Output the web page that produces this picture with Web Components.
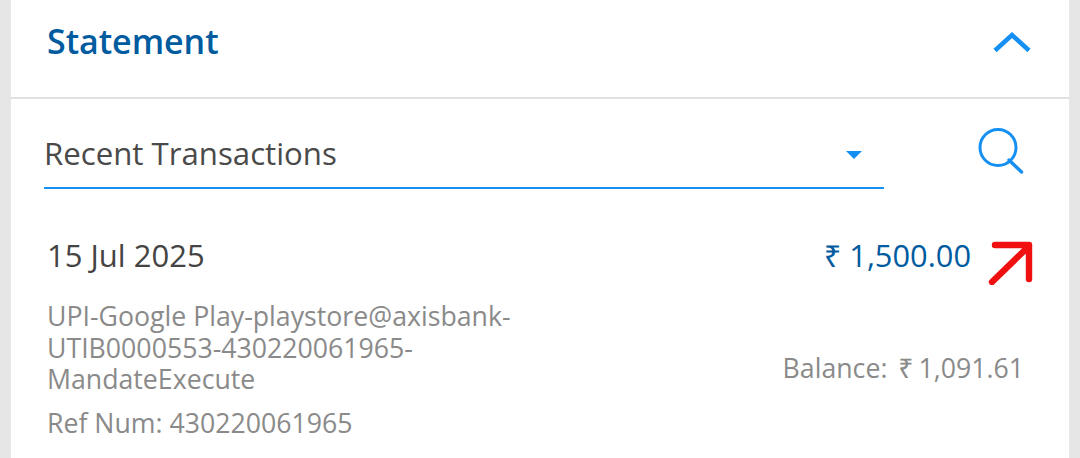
<!DOCTYPE html>
<html>
<head>
<meta charset="utf-8">
<style>
  html, body { margin: 0; padding: 0; height: 458px; overflow: hidden; background: #e6e6e6; font-family: "Open Sans", "Noto Sans", sans-serif; }
</style>
</head>
<body>
<statement-card>
  <statement-header slot="header">Statement</statement-header>
  <statement-filter slot="filter">Recent Transactions</statement-filter>
  <transaction-row date="15 Jul 2025" amount="₹ 1,500.00" balance="₹ 1,091.61" ref="430220061965">
    UPI-Google Play-playstore@axisbank-<br>UTIB0000553-430220061965-<br>MandateExecute
  </transaction-row>
</statement-card>

<script>
class StatementCard extends HTMLElement {
  constructor() {
    super();
    this.attachShadow({ mode: 'open' });
    this.shadowRoot.innerHTML = `
      <style>
        :host { display: block; height: 458px; margin: 0 11px; background: #fff; }
      </style>
      <slot name="header"></slot>
      <slot name="filter"></slot>
      <slot></slot>
    `;
  }
}

class StatementHeader extends HTMLElement {
  constructor() {
    super();
    this.attachShadow({ mode: 'open' });
    this.shadowRoot.innerHTML = `
      <style>
        :host {
          display: flex; align-items: center; justify-content: space-between;
          height: 97px; box-sizing: content-box; padding: 0 38px 0 36px;
          border-bottom: 2px solid #e1e1e1;
          color: #005b9f; font-size: 34px; font-weight: 600;
        }
        .title { margin-bottom: 16px; letter-spacing: -0.05px; }
        svg { display: block; margin-bottom: 12px; }
      </style>
      <span class="title"><slot></slot></span>
      <svg width="38" height="22" viewBox="0 0 38 22">
        <path d="M2 18.5 L19 3 L36 18.5" fill="none" stroke="#1590f2" stroke-width="4.5"/>
      </svg>
    `;
  }
}

class StatementFilter extends HTMLElement {
  constructor() {
    super();
    this.attachShadow({ mode: 'open' });
    this.shadowRoot.innerHTML = `
      <style>
        :host {
          display: flex; align-items: flex-start; justify-content: space-between;
          padding: 30px 44px 0 33px; height: 60px; box-sizing: content-box;
        }
        .select {
          width: 840px; height: 60px; box-sizing: border-box;
          border-bottom: 2px solid #1590f2;
          display: flex; align-items: center; justify-content: space-between;
          padding: 0 22px 10px 0;
          color: #4a4a4a; font-size: 31.2px;
        }
        .caret { margin-top: 4px; width: 0; height: 0; border-left: 8px solid transparent; border-right: 8px solid transparent; border-top: 8px solid #1590f2; }
        svg { display: block; margin-top: -3px; }
      </style>
      <div class="select"><span><slot></slot></span><span class="caret"></span></div>
      <svg width="48" height="48" viewBox="0 0 48 48">
        <circle cx="21" cy="21.5" r="18" fill="none" stroke="#1590f2" stroke-width="3"/>
        <path d="M32 34 L44.5 46" stroke="#1590f2" stroke-width="3.4" stroke-linecap="round"/>
      </svg>
    `;
  }
}

class TransactionRow extends HTMLElement {
  constructor() {
    super();
    this.attachShadow({ mode: 'open' });
    this.shadowRoot.innerHTML = `
      <style>
        :host { display: block; padding: 46px 35px 0 36px; }
        .top { display: flex; justify-content: space-between; align-items: center; height: 40px; }
        .date { color: #444; font-size: 31px; }
        .right { display: flex; align-items: center; gap: 17px; }
        .amount { color: #005b9f; font-size: 30.8px; }
        .bottom { display: flex; justify-content: space-between; align-items: flex-start; margin-top: 25px; }
        .desc { color: #8a8a8a; font-size: 26.7px; line-height: 31.5px; }
        .ref { color: #8a8a8a; font-size: 26.7px; line-height: 32px; margin-top: 12px; }
        .balance { color: #8a8a8a; font-size: 26.7px; line-height: 32px; margin-top: 52px; margin-right: 10px; white-space: pre; }
        .balance-label { margin-right: 4px; }
        .balance-value { word-spacing: -2px; }
        svg { display: block; margin-top: 16px; }
      </style>
      <div class="top">
        <span class="date"></span>
        <div class="right">
          <span class="amount"></span>
          <svg width="46" height="44" viewBox="0 0 46 44">
            <path d="M4 41 L41 5 M7 4 H41 V38" fill="none" stroke="#f01010" stroke-width="6.4" stroke-linecap="round" stroke-linejoin="round"/>
          </svg>
        </div>
      </div>
      <div class="bottom">
        <div>
          <div class="desc"><slot></slot></div>
          <div class="ref"></div>
        </div>
        <div class="balance"><span class="balance-label">Balance: </span><span class="balance-value"></span></div>
      </div>
    `;
  }

  connectedCallback() {
    const root = this.shadowRoot;
    root.querySelector('.date').textContent = this.getAttribute('date');
    root.querySelector('.amount').textContent = this.getAttribute('amount');
    root.querySelector('.ref').textContent = 'Ref Num: ' + this.getAttribute('ref');
    root.querySelector('.balance-value').textContent = this.getAttribute('balance');
  }
}

customElements.define('statement-card', StatementCard);
customElements.define('statement-header', StatementHeader);
customElements.define('statement-filter', StatementFilter);
customElements.define('transaction-row', TransactionRow);
</script>
</body>
</html>
